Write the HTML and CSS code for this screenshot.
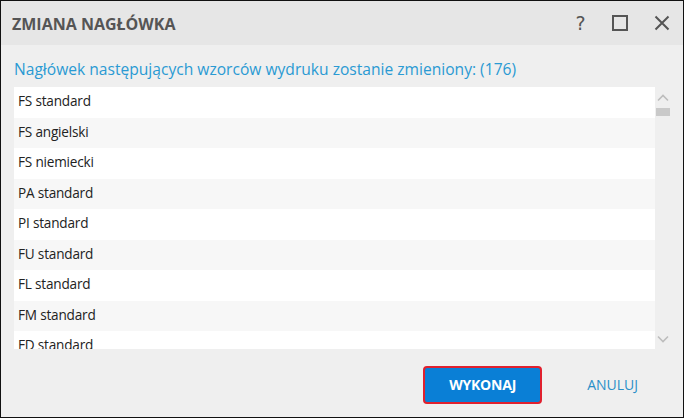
FILE: index.html
```html
<!DOCTYPE html>
<html lang="pl">
<head>
<meta charset="utf-8">
<link rel="stylesheet" href="styles.css">
</head>
<body>
<div class="dialog">
  <div class="titlebar">
    <div class="title">ZMIANA NAGŁÓWKA</div>
    <div class="controls">
      <span class="ctl help">?</span>
      <span class="ctl"><svg width="16" height="16" viewBox="0 0 16 16"><rect x="1" y="1" width="14" height="14" fill="none" stroke="#555" stroke-width="2"/></svg></span>
      <span class="ctl"><svg width="16" height="16" viewBox="0 0 16 16"><path d="M1.5 1.5 L14.5 14.5 M14.5 1.5 L1.5 14.5" stroke="#555" stroke-width="2" fill="none"/></svg></span>
    </div>
  </div>
  <div class="content">
    <div class="subtitle">Nagłówek następujących wzorców wydruku zostanie zmieniony: (176)</div>
    <div class="listwrap">
      <div class="list">
        <div class="row">FS standard</div>
        <div class="row alt">FS angielski</div>
        <div class="row">FS niemiecki</div>
        <div class="row alt">PA standard</div>
        <div class="row">PI standard</div>
        <div class="row alt">FU standard</div>
        <div class="row">FL standard</div>
        <div class="row alt">FM standard</div>
        <div class="row">FD standard</div>
      </div>
      <div class="scrollbar">
        <svg class="arrow" width="12" height="8" viewBox="0 0 12 8"><path d="M1 6.5 L6 1.5 L11 6.5" stroke="#bdbdbd" stroke-width="1.6" fill="none"/></svg>
        <div class="thumb"></div>
        <div class="track"></div>
        <svg class="arrow" width="12" height="8" viewBox="0 0 12 8"><path d="M1 1.5 L6 6.5 L11 1.5" stroke="#bdbdbd" stroke-width="1.6" fill="none"/></svg>
      </div>
    </div>
    <div class="footer">
      <button class="btn primary">WYKONAJ</button>
      <button class="btn link">ANULUJ</button>
    </div>
  </div>
</div>
</body>
</html>
```
FILE: styles.css
```css
html, body {
  margin: 0;
  padding: 0;
}
body {
  width: 684px;
  height: 418px;
  font-family: "Open Sans", "Noto Sans", sans-serif;
}
.dialog {
  box-sizing: border-box;
  width: 684px;
  height: 418px;
  border: 1px solid #111;
  background: #efefef;
  display: flex;
  flex-direction: column;
}
.titlebar {
  height: 44px;
  background: #e6e6e6;
  display: flex;
  align-items: center;
  justify-content: space-between;
  padding: 0 13px 0 11px;
}
.title {
  font-weight: 700;
  font-size: 16px;
  color: #555;
  padding-top: 1px;
}
.controls {
  display: flex;
  align-items: center;
  gap: 26px;
}
.ctl {
  display: flex;
  justify-content: center;
  align-items: center;
  color: #555;
}
.ctl.help {
  font-size: 19px;
  font-family: "DejaVu Sans", sans-serif;
  line-height: 20px;
  width: 11px;
}
.content {
  flex: 1;
  display: flex;
  flex-direction: column;
  padding: 0 12px 0 13px;
}
.subtitle {
  color: #2a9ad3;
  font-size: 15.6px;
  font-family: "Open Sans", sans-serif;
  margin-top: 14px;
  height: 28px;
  line-height: 21px;
}
.listwrap {
  display: flex;
  height: 262px;
  overflow: hidden;
}
.list {
  width: 641px;
  overflow: hidden;
}
.row {
  height: 30.5px;
  line-height: 28px;
  background: #ffffff;
  padding-left: 4px;
  font-size: 13.6px;
  color: #222;
  font-family: "Open Sans", sans-serif;
  letter-spacing: -0.2px;
}
.row.alt {
  background: #f7f7f7;
}
.scrollbar {
  width: 16px;
  display: flex;
  flex-direction: column;
  align-items: center;
}
.arrow {
  margin-top: 7px;
}
.scrollbar .arrow:last-child {
  margin-top: 0;
  margin-bottom: 6px;
}
.thumb {
  width: 14px;
  height: 8px;
  background: #c9c9c9;
  margin-top: 6px;
}
.track {
  flex: 1;
}
.footer {
  flex: 1;
  display: flex;
  align-items: center;
  justify-content: flex-end;
  padding-right: 33px;
  gap: 45px;
  padding-top: 3px;
}
.btn {
  font-family: "Open Sans", sans-serif;
  font-size: 14px;
  cursor: pointer;
}
.btn.primary {
  width: 119px;
  height: 38px;
  background: #0a7fd6;
  color: #fff;
  font-weight: 700;
  border: 2px solid #e0202e;
  border-radius: 4px;
  letter-spacing: -0.2px;
}
.btn.link {
  background: none;
  border: none;
  color: #2a8fc8;
  padding: 0;
}
```
